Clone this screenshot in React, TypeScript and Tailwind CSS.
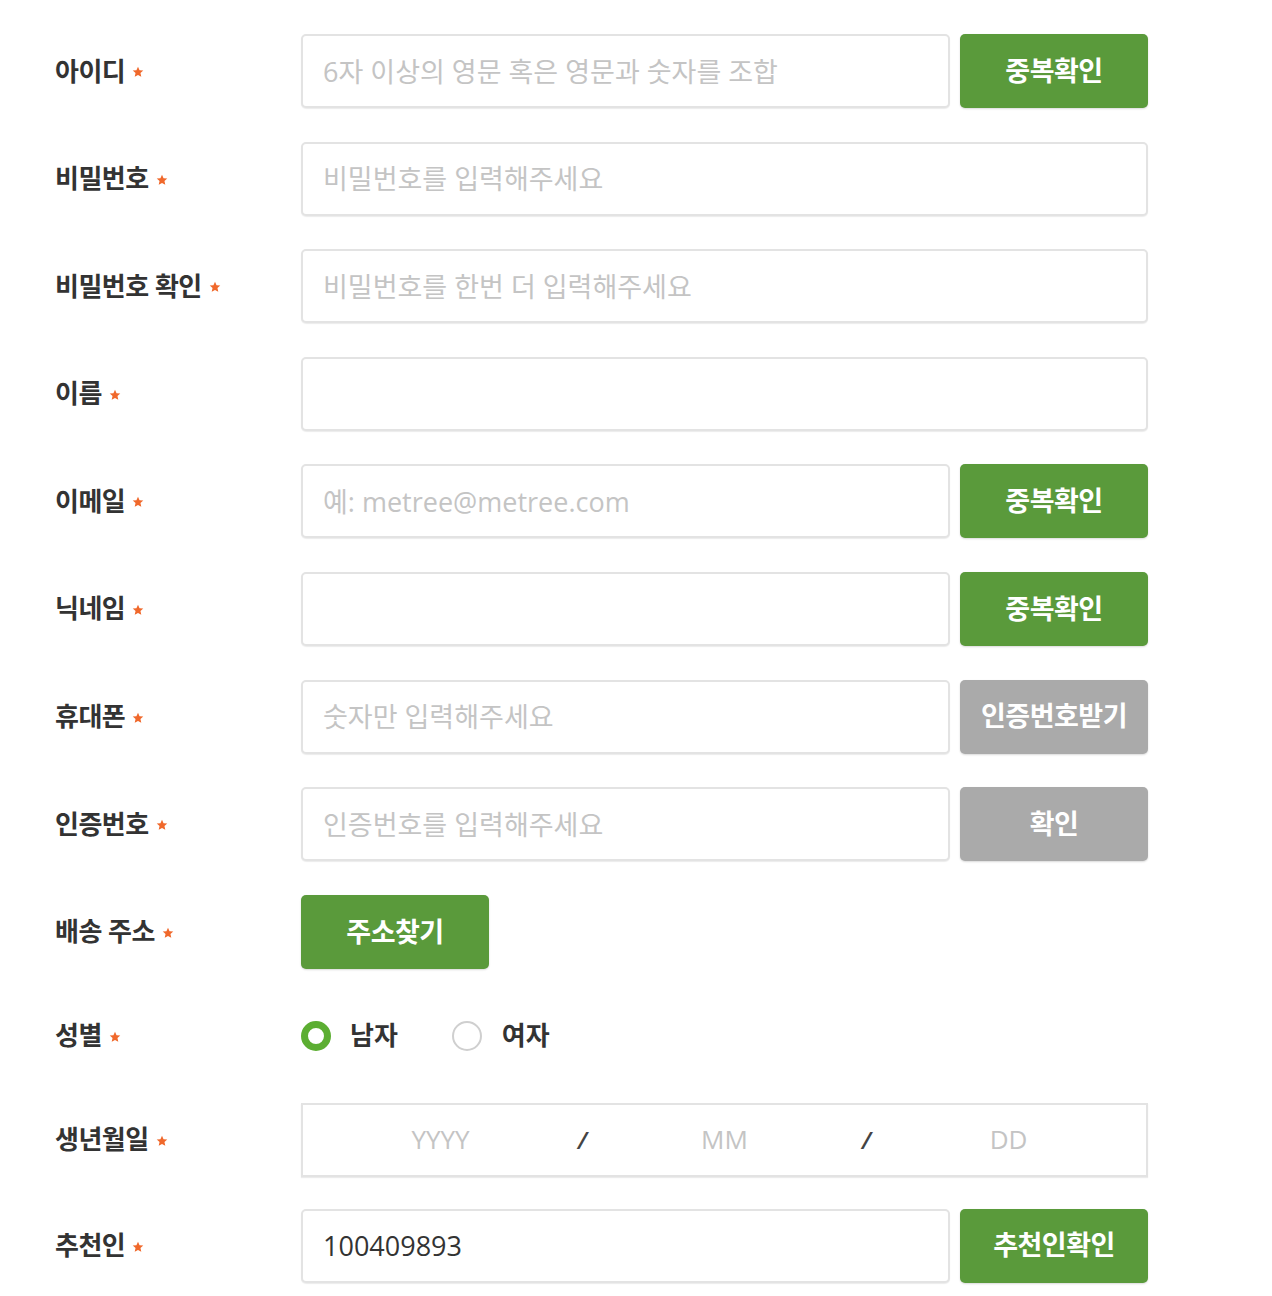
import React, { FC, useState } from 'react';

const FONT = "font-['Open_Sans','Noto_Sans_CJK_KR',sans-serif]";

const Star: FC = () => (
  <svg className="ml-[7px] mt-[2px] h-[12px] w-[12px]" viewBox="0 0 24 24" aria-hidden="true">
    <path fill="#f0682b" d="M12 1.5l3.1 7 7.4.7-5.6 5 1.7 7.4L12 17.8l-6.6 3.8 1.7-7.4-5.6-5 7.4-.7z" />
  </svg>
);

const Label: FC<{ text: string }> = ({ text }) => (
  <div className="flex w-[246px] shrink-0 items-center">
    <span className="text-[26px] font-bold tracking-[-0.5px] text-[#333]">{text}</span>
    <Star />
  </div>
);

const inputCls =
  "h-[74px] rounded-[5px] border-2 border-[#e3e3e3] bg-white px-[20px] text-[27px] text-[#333] placeholder-[#c4c4c4] outline-none shadow-[0_1px_1px_rgba(0,0,0,0.08)]";

const Btn: FC<{ text: string; gray?: boolean }> = ({ text, gray }) => (
  <button
    className={
      (gray ? 'bg-[#aaaaaa]' : 'bg-[#5a9a3b]') +
      ' h-[74px] w-[188px] shrink-0 rounded-[5px] text-[27px] font-bold tracking-[-0.5px] text-white shadow-[0_1px_2px_rgba(0,0,0,0.15)]'
    }
    type="button"
  >
    {text}
  </button>
);

const Row: FC<{ label: string; children: React.ReactNode; h?: string }> = ({ label, children, h }) => (
  <div className={'flex items-center ' + (h || 'h-[74px]')}>
    <Label text={label} />
    <div className="flex w-[847px] items-center gap-[10px]">{children}</div>
  </div>
);

const Radio: FC<{ on: boolean }> = ({ on }) => (
  <span
    className={
      on
        ? 'h-[30px] w-[30px] rounded-full border-[7px] border-[#5cae32] bg-white'
        : 'h-[30px] w-[30px] rounded-full border-2 border-[#cfcfcf] bg-white'
    }
  />
);

const App: FC = () => {
  const [gender, setGender] = useState('m');
  const [values, setValues] = useState({ recommender: '100409893' });

  return (
    <div className={`min-h-screen bg-white pt-[34px] pl-[55px] ${FONT}`}>
      <div className="flex flex-col gap-[33.6px]">
        <Row label="아이디">
          <input className={`${inputCls} w-[649px]`} placeholder="6자 이상의 영문 혹은 영문과 숫자를 조합" />
          <Btn text="중복확인" />
        </Row>
        <Row label="비밀번호">
          <input className={`${inputCls} w-full`} type="text" placeholder="비밀번호를 입력해주세요" />
        </Row>
        <Row label="비밀번호 확인">
          <input className={`${inputCls} w-full`} type="text" placeholder="비밀번호를 한번 더 입력해주세요" />
        </Row>
        <Row label="이름">
          <input className={`${inputCls} w-full`} />
        </Row>
        <Row label="이메일">
          <input className={`${inputCls} w-[649px]`} placeholder="예: metree@metree.com" />
          <Btn text="중복확인" />
        </Row>
        <Row label="닉네임">
          <input className={`${inputCls} w-[649px]`} />
          <Btn text="중복확인" />
        </Row>
        <Row label="휴대폰">
          <input className={`${inputCls} w-[649px]`} placeholder="숫자만 입력해주세요" />
          <Btn text="인증번호받기" gray />
        </Row>
        <Row label="인증번호">
          <input className={`${inputCls} w-[649px]`} placeholder="인증번호를 입력해주세요" />
          <Btn text="확인" gray />
        </Row>
        <Row label="배송 주소">
          <Btn text="주소찾기" />
        </Row>
        <Row label="성별" h="h-[67px]">
          <label className="flex cursor-pointer items-center" onClick={() => setGender('m')}>
            <Radio on={gender === 'm'} />
            <span className="ml-[19px] text-[26px] font-bold text-[#333]">남자</span>
          </label>
          <label className="ml-[44px] flex cursor-pointer items-center" onClick={() => setGender('f')}>
            <Radio on={gender === 'f'} />
            <span className="ml-[20px] text-[26px] font-bold text-[#333]">여자</span>
          </label>
        </Row>
        <Row label="생년월일">
          <div className="flex h-[74px] w-full items-center justify-center border-2 border-[#e3e3e3] bg-white shadow-[0_1px_1px_rgba(0,0,0,0.08)]">
            <input className="w-[142px] bg-transparent text-center text-[26px] placeholder-[#c4c4c4] outline-none" placeholder="YYYY" />
            <span className="w-[142px] text-center text-[24px] font-semibold italic text-[#444]">/</span>
            <input className="w-[142px] bg-transparent text-center text-[26px] placeholder-[#c4c4c4] outline-none" placeholder="MM" />
            <span className="w-[142px] text-center text-[24px] font-semibold italic text-[#444]">/</span>
            <input className="w-[142px] bg-transparent text-center text-[26px] placeholder-[#c4c4c4] outline-none" placeholder="DD" />
          </div>
        </Row>
        <div className="-mt-[2px]">
          <Row label="추천인">
            <input
              className={`${inputCls} w-[649px]`}
              value={values.recommender}
              onChange={({ target }) => setValues({ recommender: target.value })}
            />
            <Btn text="추천인확인" />
          </Row>
        </div>
      </div>
    </div>
  );
};

export default App;
